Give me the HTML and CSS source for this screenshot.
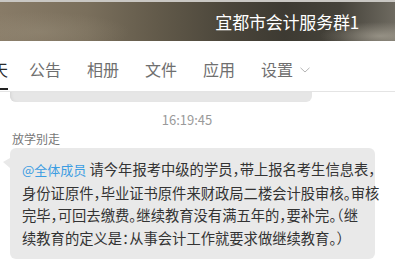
FILE: index.html
```html
<!DOCTYPE html>
<html lang="zh-CN">
<head>
<meta charset="utf-8">
<title>宜都市会计服务群1</title>
<link rel="stylesheet" href="styles.css">
</head>
<body>
<div class="window">
  <header class="header">
    <div class="title">宜都市会计服务群1</div>
  </header>
  <nav class="tabs">
    <div class="tab active">聊天</div>
    <div class="tab">公告</div>
    <div class="tab">相册</div>
    <div class="tab">文件</div>
    <div class="tab">应用</div>
    <div class="tab">设置<svg class="chev" width="10" height="6" viewBox="0 0 10 6"><polyline points="0.5,0.8 5,5 9.5,0.8" fill="none" stroke="#b4b4b4" stroke-width="1"/></svg></div>
  </nav>
  <main class="chat">
    <div class="prev-bubble"></div>
    <div class="time">16:19:45</div>
    <div class="name">放学别走</div>
    <div class="bubble">
      <span class="line"><span class="mention">@全体成员</span> 请今年报考中级的学员，带上报名考生信息表，</span>
      <span class="line">身份证原件，毕业证书原件来财政局二楼会计股审核。审核</span>
      <span class="line">完毕，可回去缴费。继续教育没有满五年的，要补完。（继</span>
      <span class="line">续教育的定义是：从事会计工作就要求做继续教育。）</span>
    </div>
  </main>
</div>
</body>
</html>
```
FILE: styles.css
```css
html, body {
  margin: 0;
  padding: 0;
  background: #ffffff;
}
body {
  width: 395px;
  height: 270px;
  overflow: hidden;
  font-family: "Noto Sans CJK SC", "Noto Sans", sans-serif;
}
.window {
  width: 395px;
}
.header {
  height: 39px;
  border-top: 2px solid #c9c7c3;
  background:
    radial-gradient(ellipse 60px 14px at 380px 34px, rgba(190,184,170,0.55), rgba(190,184,170,0) 100%),
    radial-gradient(ellipse 90px 20px at 40px 30px, rgba(160,150,130,0.35), rgba(160,150,130,0) 100%),
    linear-gradient(90deg, #887b67 0%, #7a6f5c 22%, #625a4a 40%, #4a453a 58%, #3d3a32 72%, #45423a 86%, #6e6a60 100%);
  display: flex;
  align-items: center;
  justify-content: flex-end;
  padding-right: 36px;
}
.title {
  color: #ffffff;
  font-size: 17px;
  line-height: 22px;
  margin-top: 1px;
  letter-spacing: -0.2px;
}
.tabs {
  display: flex;
  box-sizing: border-box;
  height: 51px;
  padding-bottom: 1px;
  border-bottom: 1px solid #e4e4e4;
  margin-left: -24px;
}
.tab {
  font-size: 16px;
  line-height: 20px;
  padding-top: 18px;
  color: #6f6f6f;
  border-bottom: 2px solid transparent;
  display: flex;
  align-items: flex-start;
  white-space: nowrap;
}
.tab + .tab {
  margin-left: 26px;
}
.tab.active {
  color: #2a2a2a;
  border-bottom-color: #222222;
}
.tab.active + .tab {
  margin-left: 21px;
}
.chev {
  margin-left: 7px;
  margin-top: 8px;
}
.chat {
  width: 375px;
}
.prev-bubble {
  margin-left: 10px;
  width: 302px;
  height: 10px;
  background: #e6e6e6;
  border-radius: 0 0 6px 6px;
  box-shadow: inset 3px 0 3px -2px #d2d2d2;
}
.time {
  margin-top: 10px;
  text-align: center;
  font-size: 13px;
  line-height: 16px;
  color: #9a9a9a;
  padding-right: 1px;
}
.name {
  margin-top: 3px;
  margin-left: 12px;
  font-size: 12px;
  line-height: 16px;
  color: #777777;
}
.bubble {
  position: relative;
  margin-top: 1px;
  margin-left: 10px;
  width: 365px;
  box-sizing: border-box;
  padding: 10px 8px 9px 12px;
  background: #e9e9e9;
  border-radius: 6px;
  font-size: 14.3px;
  line-height: 22.7px;
  color: #333333;
  font-feature-settings: "halt";
}
.bubble::before {
  content: "";
  position: absolute;
  left: -7px;
  top: 10px;
  border-right: 7px solid #e9e9e9;
  border-top: 4px solid transparent;
  border-bottom: 6px solid transparent;
}
.line {
  display: block;
  white-space: nowrap;
}
.mention {
  color: #3c9de2;
  font-size: 13px;
}
```
